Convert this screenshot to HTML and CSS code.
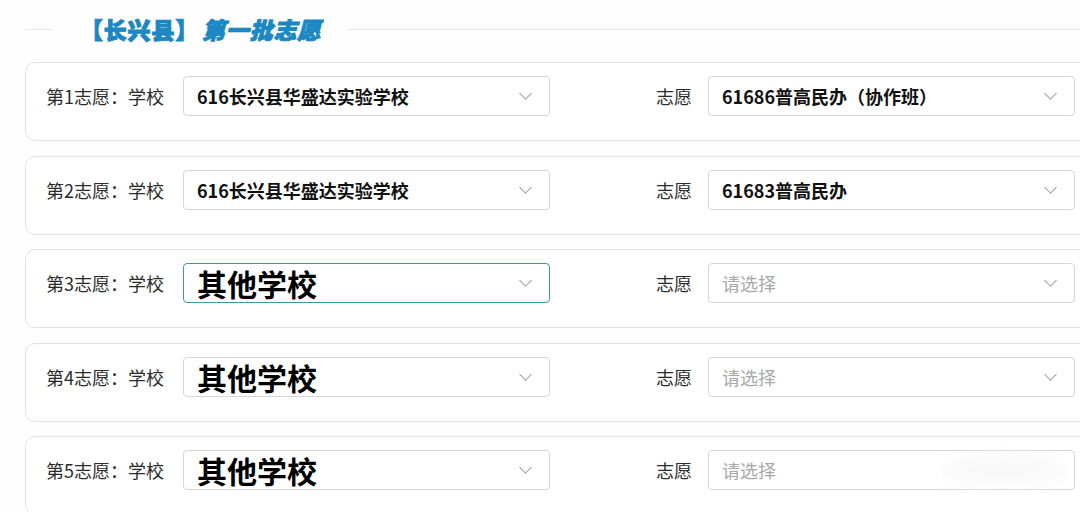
FILE: index.html
```html
<!DOCTYPE html>
<html lang="zh-CN">
<head>
    <meta charset="UTF-8">
    <meta name="viewport" content="width=device-width, initial-scale=1.0">
    <title>第一批志愿</title>
    <link rel="stylesheet" href="styles.css">
</head>
<body>
    <div class="page">
        <div class="section-head">
            <span class="head-line head-line-short"></span>
            <h2 class="section-title"><span class="county">【长兴县】</span><span class="batch">第一批志愿</span></h2>
            <span class="head-line"></span>
        </div>

        <div class="choice-list">
            <div class="choice-card">
                <div class="field">
                    <label class="field-label">第1志愿：学校</label>
                    <div class="select">
                        <span class="select-value">616长兴县华盛达实验学校</span>
                        <span class="arrow"></span>
                    </div>
                </div>
                <div class="field field-right">
                    <label class="field-label">志愿</label>
                    <div class="select">
                        <span class="select-value">61686普高民办（协作班）</span>
                        <span class="arrow"></span>
                    </div>
                </div>
            </div>

            <div class="choice-card">
                <div class="field">
                    <label class="field-label">第2志愿：学校</label>
                    <div class="select">
                        <span class="select-value">616长兴县华盛达实验学校</span>
                        <span class="arrow"></span>
                    </div>
                </div>
                <div class="field field-right">
                    <label class="field-label">志愿</label>
                    <div class="select">
                        <span class="select-value">61683普高民办</span>
                        <span class="arrow"></span>
                    </div>
                </div>
            </div>

            <div class="choice-card">
                <div class="field">
                    <label class="field-label">第3志愿：学校</label>
                    <div class="select is-focus">
                        <span class="select-value big">其他学校</span>
                        <span class="arrow"></span>
                    </div>
                </div>
                <div class="field field-right">
                    <label class="field-label">志愿</label>
                    <div class="select">
                        <span class="placeholder">请选择</span>
                        <span class="arrow"></span>
                    </div>
                </div>
            </div>

            <div class="choice-card">
                <div class="field">
                    <label class="field-label">第4志愿：学校</label>
                    <div class="select">
                        <span class="select-value big">其他学校</span>
                        <span class="arrow"></span>
                    </div>
                </div>
                <div class="field field-right">
                    <label class="field-label">志愿</label>
                    <div class="select">
                        <span class="placeholder">请选择</span>
                        <span class="arrow"></span>
                    </div>
                </div>
            </div>

            <div class="choice-card">
                <div class="field">
                    <label class="field-label">第5志愿：学校</label>
                    <div class="select">
                        <span class="select-value big">其他学校</span>
                        <span class="arrow"></span>
                    </div>
                </div>
                <div class="field field-right">
                    <label class="field-label">志愿</label>
                    <div class="select">
                        <span class="placeholder">请选择</span>
                        <span class="smudge"></span>
                    </div>
                </div>
            </div>
        </div>
    </div>
</body>
</html>
```

FILE: styles.css
```css
* {
    margin: 0;
    padding: 0;
    box-sizing: border-box;
}

body {
    background: #fefefe;
    font-family: "Noto Sans CJK SC", "Noto Sans", sans-serif;
    color: #333;
    overflow: hidden;
}

.page {
    width: 1120px;
    padding-left: 25px;
}

/* section header */
.section-head {
    display: flex;
    align-items: center;
    height: 40px;
    margin-top: 9px;
    margin-bottom: 13px;
}

.head-line {
    flex: 1;
    height: 1px;
    background: #e6e6e6;
}

.head-line-short {
    flex: 0 0 27px;
}

.section-title {
    margin: 0 26px 0 28px;
    font-size: 23px;
    font-weight: 900;
    color: #1b88c3;
    letter-spacing: 0.8px;
    line-height: 1;
    -webkit-text-stroke: 0.9px #1b88c3;
    text-shadow: 0 0 1px rgba(27, 136, 195, 0.4);
}

.batch {
    font-style: italic;
    margin-left: 3px;
}

/* cards */
.choice-list {
    display: flex;
    flex-direction: column;
    gap: 14.5px;
}

.choice-card {
    height: 79px;
    display: flex;
    align-items: flex-start;
    padding: 13px 0 0 20px;
    border: 1px solid #e2e2e2;
    border-radius: 10px;
    background: #fff;
}

.field {
    display: flex;
    align-items: center;
}

.field-right {
    margin-left: 20px;
}

.field-label {
    width: 122px;
    margin-right: 15px;
    font-size: 18px;
    color: #2b2b2b;
    white-space: nowrap;
}

.field-right .field-label {
    text-align: right;
    margin-right: 16px;
}

.select {
    position: relative;
    width: 367px;
    height: 40px;
    display: flex;
    align-items: center;
    padding-left: 13px;
    border: 1px solid #d6d6d6;
    border-radius: 4px;
    background: #fff;
}

.select.is-focus {
    border: 1.5px solid #3f98a2;
}

.select-value {
    font-size: 18px;
    font-weight: 700;
    color: #111;
    white-space: nowrap;
}

.select-value.big {
    font-size: 30px;
    color: #000;
}

.placeholder {
    font-size: 18px;
    color: #a8a8a8;
}

/* chevron */
.arrow {
    position: absolute;
    right: 19px;
    top: 12px;
    width: 9px;
    height: 9px;
    border-right: 1.3px solid #9a9a9a;
    border-bottom: 1.3px solid #9a9a9a;
    transform: rotate(45deg);
}

.smudge {
    position: absolute;
    right: 10px;
    top: 6px;
    width: 120px;
    height: 26px;
    background: #f7f7f7;
    filter: blur(8px);
    border-radius: 50%;
}
```
